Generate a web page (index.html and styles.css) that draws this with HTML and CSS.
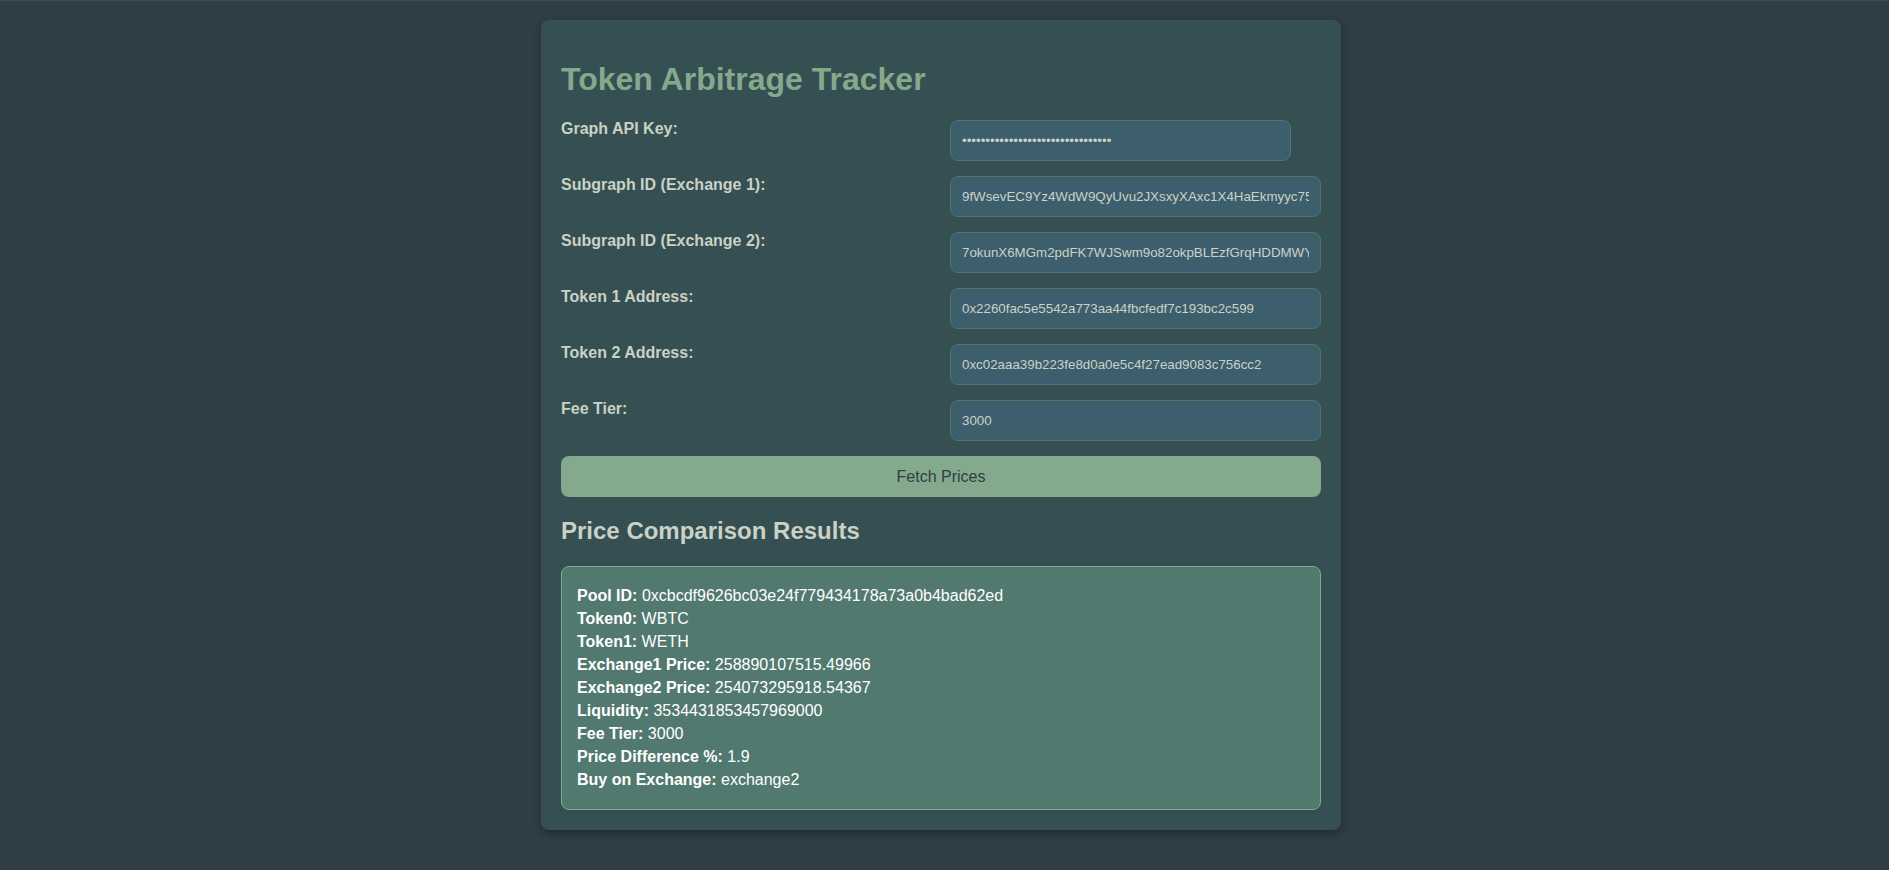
FILE: index.html
```html
<!DOCTYPE html>
<html lang="en">
<head>
<meta charset="utf-8">
<title>Token Arbitrage Tracker</title>
<link rel="stylesheet" href="styles.css">
</head>
<body>
<div class="card">
  <h1 class="title">Token Arbitrage Tracker</h1>
  <form class="form">
    <div class="row">
      <label class="label" for="apikey">Graph API Key:</label>
      <input class="input input-short" id="apikey" type="password" value="abcdefghijklmnopqrstuvwxyz123456">
    </div>
    <div class="row">
      <label class="label" for="sub1">Subgraph ID (Exchange 1):</label>
      <input class="input" id="sub1" type="text" value="9fWsevEC9Yz4WdW9QyUvu2JXsxyXAxc1X4HaEkmyyc75">
    </div>
    <div class="row">
      <label class="label" for="sub2">Subgraph ID (Exchange 2):</label>
      <input class="input" id="sub2" type="text" value="7okunX6MGm2pdFK7WJSwm9o82okpBLEzfGrqHDDMWYvq">
    </div>
    <div class="row">
      <label class="label" for="t1">Token 1 Address:</label>
      <input class="input" id="t1" type="text" value="0x2260fac5e5542a773aa44fbcfedf7c193bc2c599">
    </div>
    <div class="row">
      <label class="label" for="t2">Token 2 Address:</label>
      <input class="input" id="t2" type="text" value="0xc02aaa39b223fe8d0a0e5c4f27ead9083c756cc2">
    </div>
    <div class="row">
      <label class="label" for="fee">Fee Tier:</label>
      <input class="input" id="fee" type="text" value="3000">
    </div>
    <button class="btn" type="button">Fetch Prices</button>
  </form>
  <h2 class="subtitle">Price Comparison Results</h2>
  <div class="results">
    <div class="line"><strong>Pool ID:</strong> 0xcbcdf9626bc03e24f779434178a73a0b4bad62ed</div>
    <div class="line"><strong>Token0:</strong> WBTC</div>
    <div class="line"><strong>Token1:</strong> WETH</div>
    <div class="line"><strong>Exchange1 Price:</strong> 258890107515.49966</div>
    <div class="line"><strong>Exchange2 Price:</strong> 254073295918.54367</div>
    <div class="line"><strong>Liquidity:</strong> 3534431853457969000</div>
    <div class="line"><strong>Fee Tier:</strong> 3000</div>
    <div class="line"><strong>Price Difference %:</strong> 1.9</div>
    <div class="line"><strong>Buy on Exchange:</strong> exchange2</div>
  </div>
</div>
</body>
</html>
```
FILE: styles.css
```css
html, body {
  background: #2f3e46;
}
body {
  margin: 0;
  padding: 20px 7px 20px 0;
  font-family: "Liberation Sans", Arial, sans-serif;
  color: #cad2c5;
  border-top: 1px solid #3a4b52;
}
.card {
  width: 800px;
  box-sizing: border-box;
  margin: -1px auto 0;
  padding: 20px;
  background: #354f52;
  border-radius: 8px;
  box-shadow: 0 4px 10px rgba(0, 0, 0, 0.3);
}
.title {
  margin: 21.44px 0;
  font-size: 32px;
  font-weight: bold;
  color: #84a98c;
}
.form {
  display: flex;
  flex-direction: column;
}
.row {
  display: grid;
  grid-template-columns: 1fr 371px;
  align-items: start;
  margin-bottom: 15px;
}
.label {
  font-size: 16px;
  font-weight: bold;
  color: #cad2c5;
  line-height: 16px;
  padding-top: 1px;
}
.input {
  box-sizing: border-box;
  width: 371px;
  height: 41px;
  padding: 0 11px;
  font-family: "Liberation Sans", Arial, sans-serif;
  font-size: 13.33px;
  color: #cad2c5;
  background: #3d5e6d;
  border: 1px solid #4f7667;
  border-radius: 8px;
  outline: none;
}
.input-short {
  width: 341px;
}
.btn {
  height: 41px;
  padding: 1px 0 0;
  font-family: "Liberation Sans", Arial, sans-serif;
  font-size: 16px;
  color: #2f3e46;
  background: #84a98c;
  border: none;
  border-radius: 8px;
  cursor: pointer;
}
.subtitle {
  margin: 20px 0 21px;
  font-size: 24px;
  font-weight: bold;
  color: #cad2c5;
}
.results {
  padding: 17px 15px 18px;
  background: #52796f;
  border: 1px solid #84a98c;
  border-radius: 8px;
  color: #ffffff;
  font-size: 16px;
  line-height: 23px;
}
.line strong {
  font-weight: bold;
}
```
